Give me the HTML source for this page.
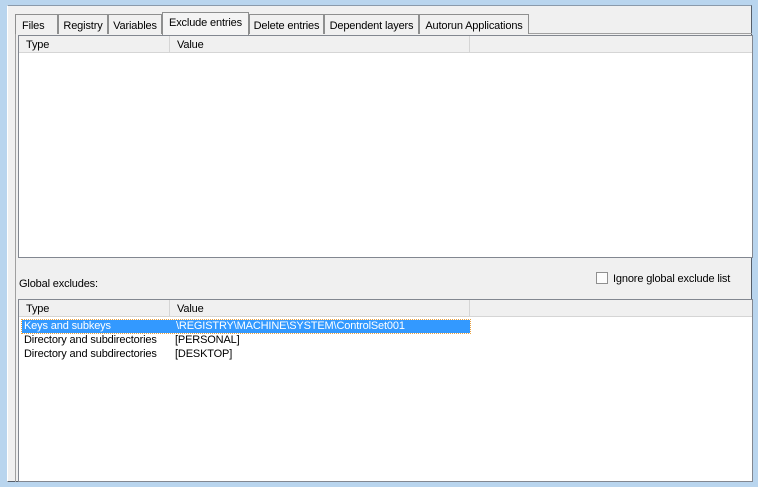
<!DOCTYPE html>
<html><head><style>
*{margin:0;padding:0;box-sizing:border-box}
body{width:758px;height:487px;overflow:hidden;background:#b9d5ee;font-family:"Liberation Sans",sans-serif;font-size:11px;letter-spacing:-0.15px;color:#000;position:relative}
.abs{position:absolute}
.panel{left:7px;top:5px;width:745px;height:477px;background:#f0f0f0;border-top:1px solid #8a9aab;border-right:1px solid #555e6a;border-bottom:1px solid #555e6a;border-left:1px solid #fff}
.tab{position:absolute;top:14px;height:20px;border:1px solid #8e8f8f;border-bottom:none;background:#f0f0f0;padding:5px 0 0 0;text-align:center;white-space:nowrap}
.tab.sel{top:12px;height:23px;background:#f4f4f4;z-index:2;padding-top:4px}
.lv{background:#fff;border:1px solid #828790}
.hdr{position:absolute;left:0;top:0;right:0;height:17px;background:#f0f0f0;border-bottom:1px solid #d5d5d5}
.hc{position:absolute;top:0;height:16px;border-right:1px solid #d5d5d5;padding:3px 0 0 7px}
.row{position:absolute;height:13px;white-space:nowrap}
</style></head><body>
<div class="abs panel"></div>
<div class="abs" style="left:15px;top:33px;width:737px;height:449px;border:1px solid #a0a0a0;border-right:none;border-bottom:none"></div>
<div class="tab" style="left:15px;width:43px;text-align:left;padding-left:6px">Files</div>
<div class="tab" style="left:58px;width:50px">Registry</div>
<div class="tab" style="left:108px;width:54px">Variables</div>
<div class="tab sel" style="left:162px;width:87px">Exclude entries</div>
<div class="tab" style="left:249px;width:75px">Delete entries</div>
<div class="tab" style="left:324px;width:95px">Dependent layers</div>
<div class="tab" style="left:419px;width:110px">Autorun Applications</div>

<div class="abs lv" style="left:18px;top:35px;width:735px;height:223px">
 <div class="hdr"><div class="hc" style="left:0;width:151px">Type</div><div class="hc" style="left:151px;width:300px">Value</div></div>
</div>

<div class="abs" style="left:19px;top:278px">Global excludes:</div>
<div class="abs" style="left:596px;top:272px;width:12px;height:12px;border:1px solid #8f8f8f;background:#fcfcfc"></div>
<div class="abs" style="left:613px;top:273px">Ignore global exclude list</div>

<div class="abs lv" style="left:18px;top:299px;width:735px;height:183px">
 <div class="hdr"><div class="hc" style="left:0;width:151px">Type</div><div class="hc" style="left:151px;width:300px">Value</div></div>
 <div class="row" style="left:3px;top:20px;width:448px;background:#3399ff;color:#fff;outline:1px dotted #e8a040"><span style="position:absolute;left:2px">Keys and subkeys</span><span style="position:absolute;left:154px">\REGISTRY\MACHINE\SYSTEM\ControlSet001</span></div>
 <div class="row" style="left:5px;top:34px">Directory and subdirectories</div><div class="row" style="left:156px;top:34px">[PERSONAL]</div>
 <div class="row" style="left:5px;top:48px">Directory and subdirectories</div><div class="row" style="left:156px;top:48px">[DESKTOP]</div>
</div>
</body></html>
